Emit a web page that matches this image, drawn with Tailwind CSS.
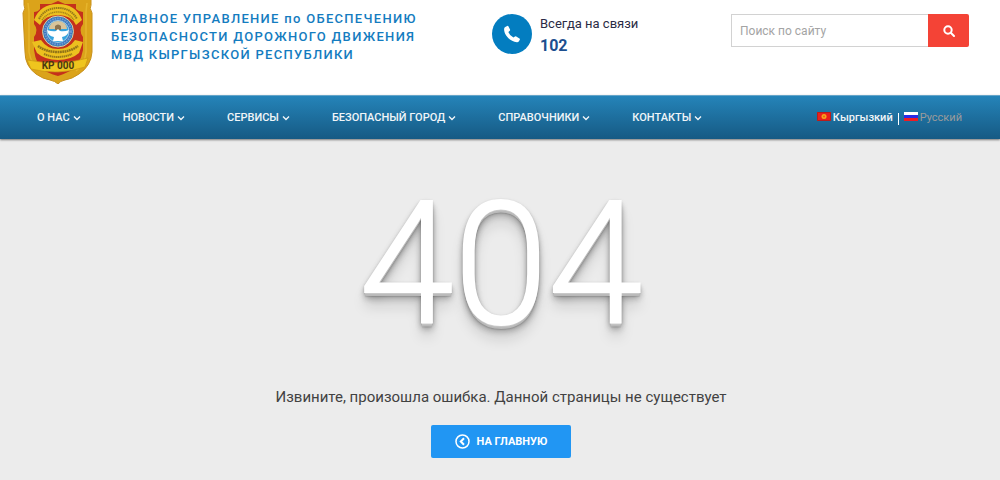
<!DOCTYPE html>
<html lang="ru">
<head>
    <meta charset="UTF-8">
    <meta name="viewport" content="width=device-width, initial-scale=1.0">
    <title>404 — страница не найдена</title>
    <script src="https://cdn.jsdelivr.net/npm/@tailwindcss/browser@4"></script>
</head>
<body class="min-h-screen flex flex-col bg-[#ececec] font-[Roboto,sans-serif] text-[#424242]">

    <!-- Header -->
    <header class="flex items-start h-[95px] bg-white pl-[22px] pr-[31px]">
        <a href="#" class="flex flex-1 items-start">
            <svg class="w-[71px] h-[84px] shrink-0" viewBox="0 0 71 84" role="img" aria-label="Эмблема">
                <path d="M2 -6H69V5Q67 8 70 13V52Q69 66 57 74Q50 79 43 80Q38 81 36 84Q33 81 28 80Q21 79 14 74Q3 66 3 52L1 13Q4 8 2 5Z" fill="#dba31a" stroke="#c8901a" />
                <path d="M6 3L7 12V52Q9 64 18 71M65 3L64 12V52Q63 64 54 71" fill="none" stroke="#e6b52c" stroke-width="1.500" />
                <path d="M18 4H29L36 1L43 4H54V9Q57 12 61 12V24Q56 30 61 37V50Q58 66 48 71Q40 75 36 76Q31 75 23 71Q14 66 12 50V37Q17 30 12 24V12Q16 12 18 9Z" fill="#c5301b" />
                <path d="M12 20Q18 4 36 4Q54 4 60 20L54 25Q49 15 36 15Q23 15 18 25Z" fill="#ecc01f" />
                <path d="M10 42L19 40Q25 49 36 49Q47 49 53 40L61 42L57 53Q49 60 36 60Q23 60 15 53Z" fill="#ecc01f" />
                <path d="M17 19Q23 8 36 8Q49 8 55 19" fill="none" stroke="#5f4a14" stroke-width="2" stroke-dasharray="1.500 .6" opacity=".6" />
                <path d="M20 20Q26 12 36 12Q46 12 52 20" fill="none" stroke="#5f4a14" stroke-width="1.500" stroke-dasharray="1.200 .6" opacity=".5" />
                <circle cx="36" cy="31.500" r="15.500" fill="#3b78bd" stroke="#d9cfa0" />
                <circle cx="36" cy="31.500" r="13" fill="none" stroke="#6f9bd2" stroke-width="2" stroke-dasharray="1.500 1" />
                <circle cx="36" cy="31.500" r="11" fill="#35a3de" stroke="#cfe3f2" stroke-width=".7" />
                <path d="M27 29A9 8 0 0 1 45 29Z" fill="#d9c49a" />
                <path d="M33 26Q36 23 39 26V30H33Z" fill="#8c7450" />
                <path d="M25 30Q31 32 34 31L36 29L38 31Q42 32 47 30Q46 36 40 37L41 41H31L32 37Q26 36 25 30Z" fill="#fff" />
                <path d="M16 46Q24 52 36 52Q48 52 56 46" fill="none" stroke="#5f4a14" stroke-width="2.500" stroke-dasharray="1.800 .5" opacity=".65" />
                <path d="M22 54Q29 57 36 57Q43 57 50 54" fill="none" stroke="#5f4a14" stroke-width="2" stroke-dasharray="1.500 .5" opacity=".6" />
                <path d="M5 60L19 62Q36 64 53 61L66 58L63 67Q36 76 9 69Z" fill="#efc51e" stroke="#c99414" stroke-width=".7" />
                <text x="36" y="69" text-anchor="middle" class="font-[Roboto,sans-serif] text-[10px] font-bold" fill="#4a3a12">KP 000</text>
            </svg>
            <span class="ml-[18px] mt-2.5 text-[13px]/[18px] font-medium tracking-widest text-[#147cc0] whitespace-nowrap">
                ГЛАВНОЕ УПРАВЛЕНИЕ по ОБЕСПЕЧЕНИЮ<br>
                БЕЗОПАСНОСТИ ДОРОЖНОГО ДВИЖЕНИЯ<br>
                МВД КЫРГЫЗСКОЙ РЕСПУБЛИКИ
            </span>
        </a>

        <div class="flex mt-3.5 w-[239px] gap-2">
            <span class="flex items-center justify-center size-10 rounded-full bg-[#037dc0]">
                <svg class="size-[18px]" viewBox="0 0 20 20" fill="#fff">
                    <path d="M2.500 2.200L4.600 1Q5.500.7 6 1.500L7.800 5Q8.100 5.800 7.500 6.400L6 7.800Q7.300 11.800 11.600 14L13.300 12.700Q14 12.300 14.700 12.700L18.300 15Q19 15.500 18.700 16.300L17.500 18.300Q16.800 19.200 15.500 19.100C8 18.500 1.200 11.500 1.200 4.500Q1.300 2.900 2.500 2.200Z" />
                </svg>
            </span>
            <div>
                <p class="text-[13px]/5 text-[#2b2b45]">Всегда на связи</p>
                <p class="text-base/6 font-bold text-[#1d4f8f]">102</p>
            </div>
        </div>

        <form class="flex mt-3.5 w-[238px] h-[33px]">
            <input type="search" aria-label="Поиск по сайту" placeholder="Поиск по сайту" class="flex-1 min-w-0 border border-r-0 border-[#d2d2d2] px-2 text-xs outline-none placeholder:text-[#a4a4a4]">
            <button type="submit" aria-label="Найти" class="flex items-center justify-center w-[41px] rounded-r-xs bg-[#f44336]">
                <svg class="size-3" viewBox="0 0 12 12" fill="none" stroke="#fff" stroke-width="2">
                    <circle cx="5" cy="5" r="3.700" />
                    <path d="M7.800 7.800L11 11" stroke-linecap="round" />
                </svg>
            </button>
        </form>
    </header>

    <!-- Main menu -->
    <nav class="flex items-center h-11 border-t border-[#65a5c9] bg-linear-to-b from-[#2584b9] to-[#165a84] pl-[37px] pr-[38px] pt-0.5 text-[11px] font-medium text-[#f0f5f8] shadow-[0_1px_2px_#00000080]">
        <ul class="flex flex-1 gap-[42px] whitespace-nowrap">
            <li><a href="#" class="flex items-center gap-[3px]">О НАС <svg class="size-2 mb-0.5" viewBox="0 0 8 8" fill="none" stroke="currentColor" stroke-width="1.400"><path d="M1 2.500L4 5.500L7 2.500" /></svg></a></li>
            <li><a href="#" class="flex items-center gap-[3px]">НОВОСТИ <svg class="size-2 mb-0.5" viewBox="0 0 8 8" fill="none" stroke="currentColor" stroke-width="1.400"><path d="M1 2.500L4 5.500L7 2.500" /></svg></a></li>
            <li><a href="#" class="flex items-center gap-[3px]">СЕРВИСЫ <svg class="size-2 mb-0.5" viewBox="0 0 8 8" fill="none" stroke="currentColor" stroke-width="1.400"><path d="M1 2.500L4 5.500L7 2.500" /></svg></a></li>
            <li><a href="#" class="flex items-center gap-[3px]">БЕЗОПАСНЫЙ ГОРОД <svg class="size-2 mb-0.5" viewBox="0 0 8 8" fill="none" stroke="currentColor" stroke-width="1.400"><path d="M1 2.500L4 5.500L7 2.500" /></svg></a></li>
            <li><a href="#" class="flex items-center gap-[3px]">СПРАВОЧНИКИ <svg class="size-2 mb-0.5" viewBox="0 0 8 8" fill="none" stroke="currentColor" stroke-width="1.400"><path d="M1 2.500L4 5.500L7 2.500" /></svg></a></li>
            <li><a href="#" class="flex items-center gap-[3px]">КОНТАКТЫ <svg class="size-2 mb-0.5" viewBox="0 0 8 8" fill="none" stroke="currentColor" stroke-width="1.400"><path d="M1 2.500L4 5.500L7 2.500" /></svg></a></li>
        </ul>
        <div class="flex items-center whitespace-nowrap">
            <a href="#" class="flex items-center gap-0.5">
                <svg class="w-3.5 h-[9px] mb-1" viewBox="0 0 14 9"><path d="M0 0H14V9H0Z" fill="#e8201c" /><path d="M.5 .5H13.500V8.500H.5Z" fill="none" stroke="#b81d1c" /><circle cx="7" cy="4.500" r="2.500" fill="#f7a51c" /><circle cx="7" cy="4.500" r="1" fill="#ee5a1c" /></svg>
                Кыргызкий
            </a>
            <span class="mx-[5px] w-px h-3 bg-white"></span>
            <a href="#" class="flex items-center gap-0.5 font-normal text-[#9b9b9b]">
                <svg class="w-3.5 h-[9px] mb-1" viewBox="0 0 14 9"><path d="M0 0H14V3H0Z" fill="#fff" /><path d="M0 3H14V6H0Z" fill="#2a2ae6" /><path d="M0 6H14V9H0Z" fill="#ee1c24" /></svg>
                Русский
            </a>
        </div>
    </nav>

    <!-- Error message -->
    <main class="flex flex-1 flex-col items-center pt-[38px] pb-5 pl-0.5">
        <h1 class="text-[170px]/[176px] font-light text-white [-webkit-text-stroke:2px_#fff] [text-shadow:0_1px_0_#ccc,0_2px_0_#c9c9c9,0_3px_0_#bbb,0_4px_0_#b9b9b9,0_5px_1px_#0000001a,0_0_3px_#0000001a,0_1px_2px_#0000004d,0_2px_4px_#00000033,0_4px_7px_#00000040,0_7px_7px_#00000033,0_14px_14px_#00000026]">404</h1>
        <p class="mt-8 text-[15px]/6">Извините, произошла ошибка. Данной страницы не существует</p>
        <a href="#" class="flex items-center gap-[7px] mt-4 h-[33px] rounded-xs bg-[#2196f3] px-6 text-[11px]/4 font-bold text-white">
            <svg class="size-[15px]" viewBox="0 0 15 15" fill="none" stroke="#fff">
                <circle cx="7.500" cy="7.500" r="6.500" stroke-width="1.500" />
                <path d="M9 4.300L5.800 7.500L9 10.700" stroke-width="2" />
            </svg>
            НА ГЛАВНУЮ
        </a>
    </main>

</body>
</html>
